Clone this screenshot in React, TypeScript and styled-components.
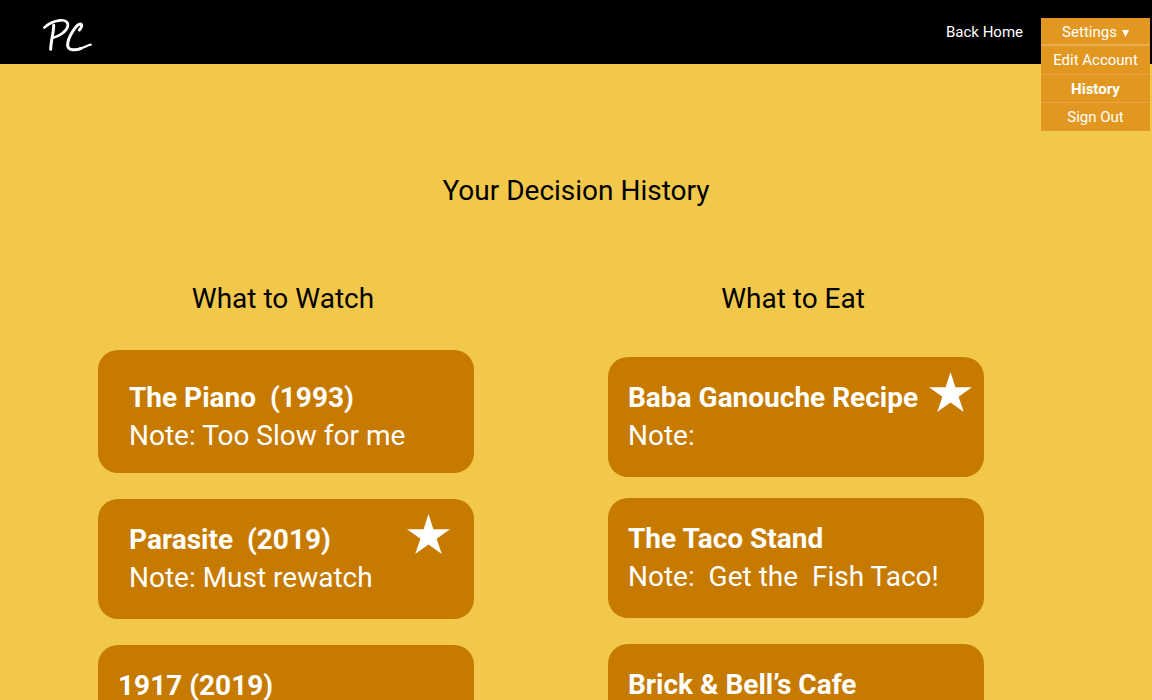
import React, { useState } from "react";
import styled, { createGlobalStyle } from "styled-components";

const GlobalStyle = createGlobalStyle`
  *, *::before, *::after { box-sizing: border-box; }
  body {
    margin: 0;
    background: #f2c84b;
    color: #000;
    font-family: Roboto, "Liberation Sans", sans-serif;
    overflow-x: hidden;
  }
  h1, h2, h3, p, ul { margin: 0; padding: 0; font-weight: 400; }
  ul { list-style: none; }
  a { color: inherit; text-decoration: none; }
`;

const Header = styled.header`
  display: flex;
  align-items: flex-start;
  justify-content: space-between;
  height: 64px;
  padding: 18px 2px 0 42px;
  background: #000;
  color: #fff;
`;

const Logo = styled.svg`
  display: block;
  width: 52px;
  height: 34px;
`;

const Nav = styled.nav`
  display: flex;
  gap: 18px;
  font-size: 15px;
  line-height: 28px;
`;

const Dropdown = styled.div`
  position: relative;
  width: 109px;
  text-align: center;
`;

const DropdownButton = styled.button`
  display: flex;
  align-items: center;
  justify-content: center;
  gap: 5px;
  width: 100%;
  height: 28px;
  padding: 2px 0 0;
  border: 0;
  border-bottom: 2px solid #e9ad4d;
  background: #e29820;
  color: #fff;
  font: inherit;
  cursor: pointer;
`;

const Caret = styled.svg`
  width: 7px;
  height: 7px;
  margin-top: 2px;
`;

const Menu = styled.ul`
  position: absolute;
  top: 100%;
  left: 0;
  z-index: 1;
  width: 100%;
  padding-bottom: 1px;
  background: #e29820;
`;

const MenuItem = styled.li`
  height: 28px;
  white-space: nowrap;

  & + & {
    border-top: 1px solid #e7a745;
  }
`;

const MenuLink = styled.a<{ $current?: boolean }>`
  display: block;
  font-weight: ${(p) => (p.$current ? 700 : 400)};
`;

const Main = styled.main`
  padding-top: 108px;
`;

const PageTitle = styled.h1`
  font-size: 28px;
  line-height: 38px;
  text-align: center;
`;

const Columns = styled.div`
  display: grid;
  grid-template-columns: 1fr 1fr;
  gap: 134px;
  padding: 70px 168px 26px 98px;
`;

const ColumnTitle = styled.h2`
  padding-right: 6px;
  font-size: 28px;
  line-height: 38px;
  text-align: center;
`;

const CardList = styled.ul<{ $top: number }>`
  padding-top: ${(p) => p.$top}px;
`;

const Card = styled.li<{ $roomy?: boolean; $tight?: boolean; $inset: number }>`
  position: relative;
  margin-bottom: ${(p) => (p.$tight ? 21 : 26)}px;
  padding: ${(p) => (p.$roomy ? "29px" : "22px")} 0 ${(p) => (p.$roomy ? "18px" : "22px")}
    ${(p) => p.$inset}px;
  border-radius: 20px;
  background: #c67a00;
  color: #fff;
  font-size: 28px;
  line-height: 38px;
  white-space: pre-wrap;
`;

const CardTitle = styled.h3`
  font-size: inherit;
  font-weight: 700;
`;

const Star = styled.svg<{ $right: number }>`
  position: absolute;
  top: 15px;
  right: ${(p) => p.$right}px;
  width: 43px;
  height: 40px;
`;

type Entry = {
  title: string;
  note: string;
  inset: number;
  star?: number;
  roomy?: boolean;
  tight?: boolean;
};

const watch: Entry[] = [
  { title: "The Piano  (1993)", note: "Note: Too Slow for me", inset: 31, roomy: true },
  { title: "Parasite  (2019)", note: "Note: Must rewatch", inset: 31, star: 24 },
  { title: "1917 (2019)", note: "Note:", inset: 20 },
];

const eat: Entry[] = [
  { title: "Baba Ganouche Recipe", note: "Note:", inset: 20, star: 12, tight: true },
  { title: "The Taco Stand", note: "Note:  Get the  Fish Taco!", inset: 20 },
  { title: "Brick & Bell’s Cafe", note: "Note:", inset: 20 },
];

function HistoryColumn({ title, top, entries }: { title: string; top: number; entries: Entry[] }) {
  return (
    <section>
      <ColumnTitle>{title}</ColumnTitle>
      <CardList $top={top}>
        {entries.map((e) => (
          <Card key={e.title} $inset={e.inset} $roomy={e.roomy} $tight={e.tight}>
            <CardTitle>{e.title}</CardTitle>
            <p>{e.note}</p>
            {e.star !== undefined && (
              <Star $right={e.star} viewBox="0 0 43 40" role="img" aria-label="Favourite">
                <path
                  fill="#fff"
                  d="M21.5 0 L26.4 15.2 H43 L29.6 24.7 L34.8 40 L21.5 30.6 L8.2 40 L13.4 24.7 L0 15.2 H16.6 Z"
                />
              </Star>
            )}
          </Card>
        ))}
      </CardList>
    </section>
  );
}

export default function App() {
  const [open, setOpen] = useState(true);
  return (
    <>
      <GlobalStyle />
      <Header>
        <a href="#home" aria-label="PC home">
          <Logo viewBox="36 39 156 102" fill="none" stroke="#fff" strokeLinecap="round" strokeLinejoin="round">
            <path strokeWidth="8" d="M43 68 C53 58 72 48 90 46 C108 44 116 53 113 64 C109 80 88 94 67 99" />
            <path strokeWidth="9" d="M71 61 C72 78 63 104 62 133" />
            <path strokeWidth="9" d="M148 75 C155 68 158 58 151 57 C139 57 113 98 113 119 C112 139 139 136 154 130" />
            <path strokeWidth="7" d="M150 131 C164 127 172 121 182 119" />
          </Logo>
        </a>
        <Nav>
          <a href="#home">Back Home</a>
          <Dropdown>
            <DropdownButton type="button" aria-expanded={open} onClick={() => setOpen(!open)}>
              Settings
              <Caret viewBox="0 0 7 7" aria-hidden="true">
                <path fill="#fff" d="M0 0 H7 L3.5 7 Z" />
              </Caret>
            </DropdownButton>
            {open && (
              <Menu>
                <MenuItem><MenuLink href="#account">Edit Account</MenuLink></MenuItem>
                <MenuItem><MenuLink href="#history" $current aria-current="page">History</MenuLink></MenuItem>
                <MenuItem><MenuLink href="#signout">Sign Out</MenuLink></MenuItem>
              </Menu>
            )}
          </Dropdown>
        </Nav>
      </Header>
      <Main>
        <PageTitle>Your Decision History</PageTitle>
        <Columns>
          <HistoryColumn title="What to Watch" top={32} entries={watch} />
          <HistoryColumn title="What to Eat" top={39} entries={eat} />
        </Columns>
      </Main>
    </>
  );
}
